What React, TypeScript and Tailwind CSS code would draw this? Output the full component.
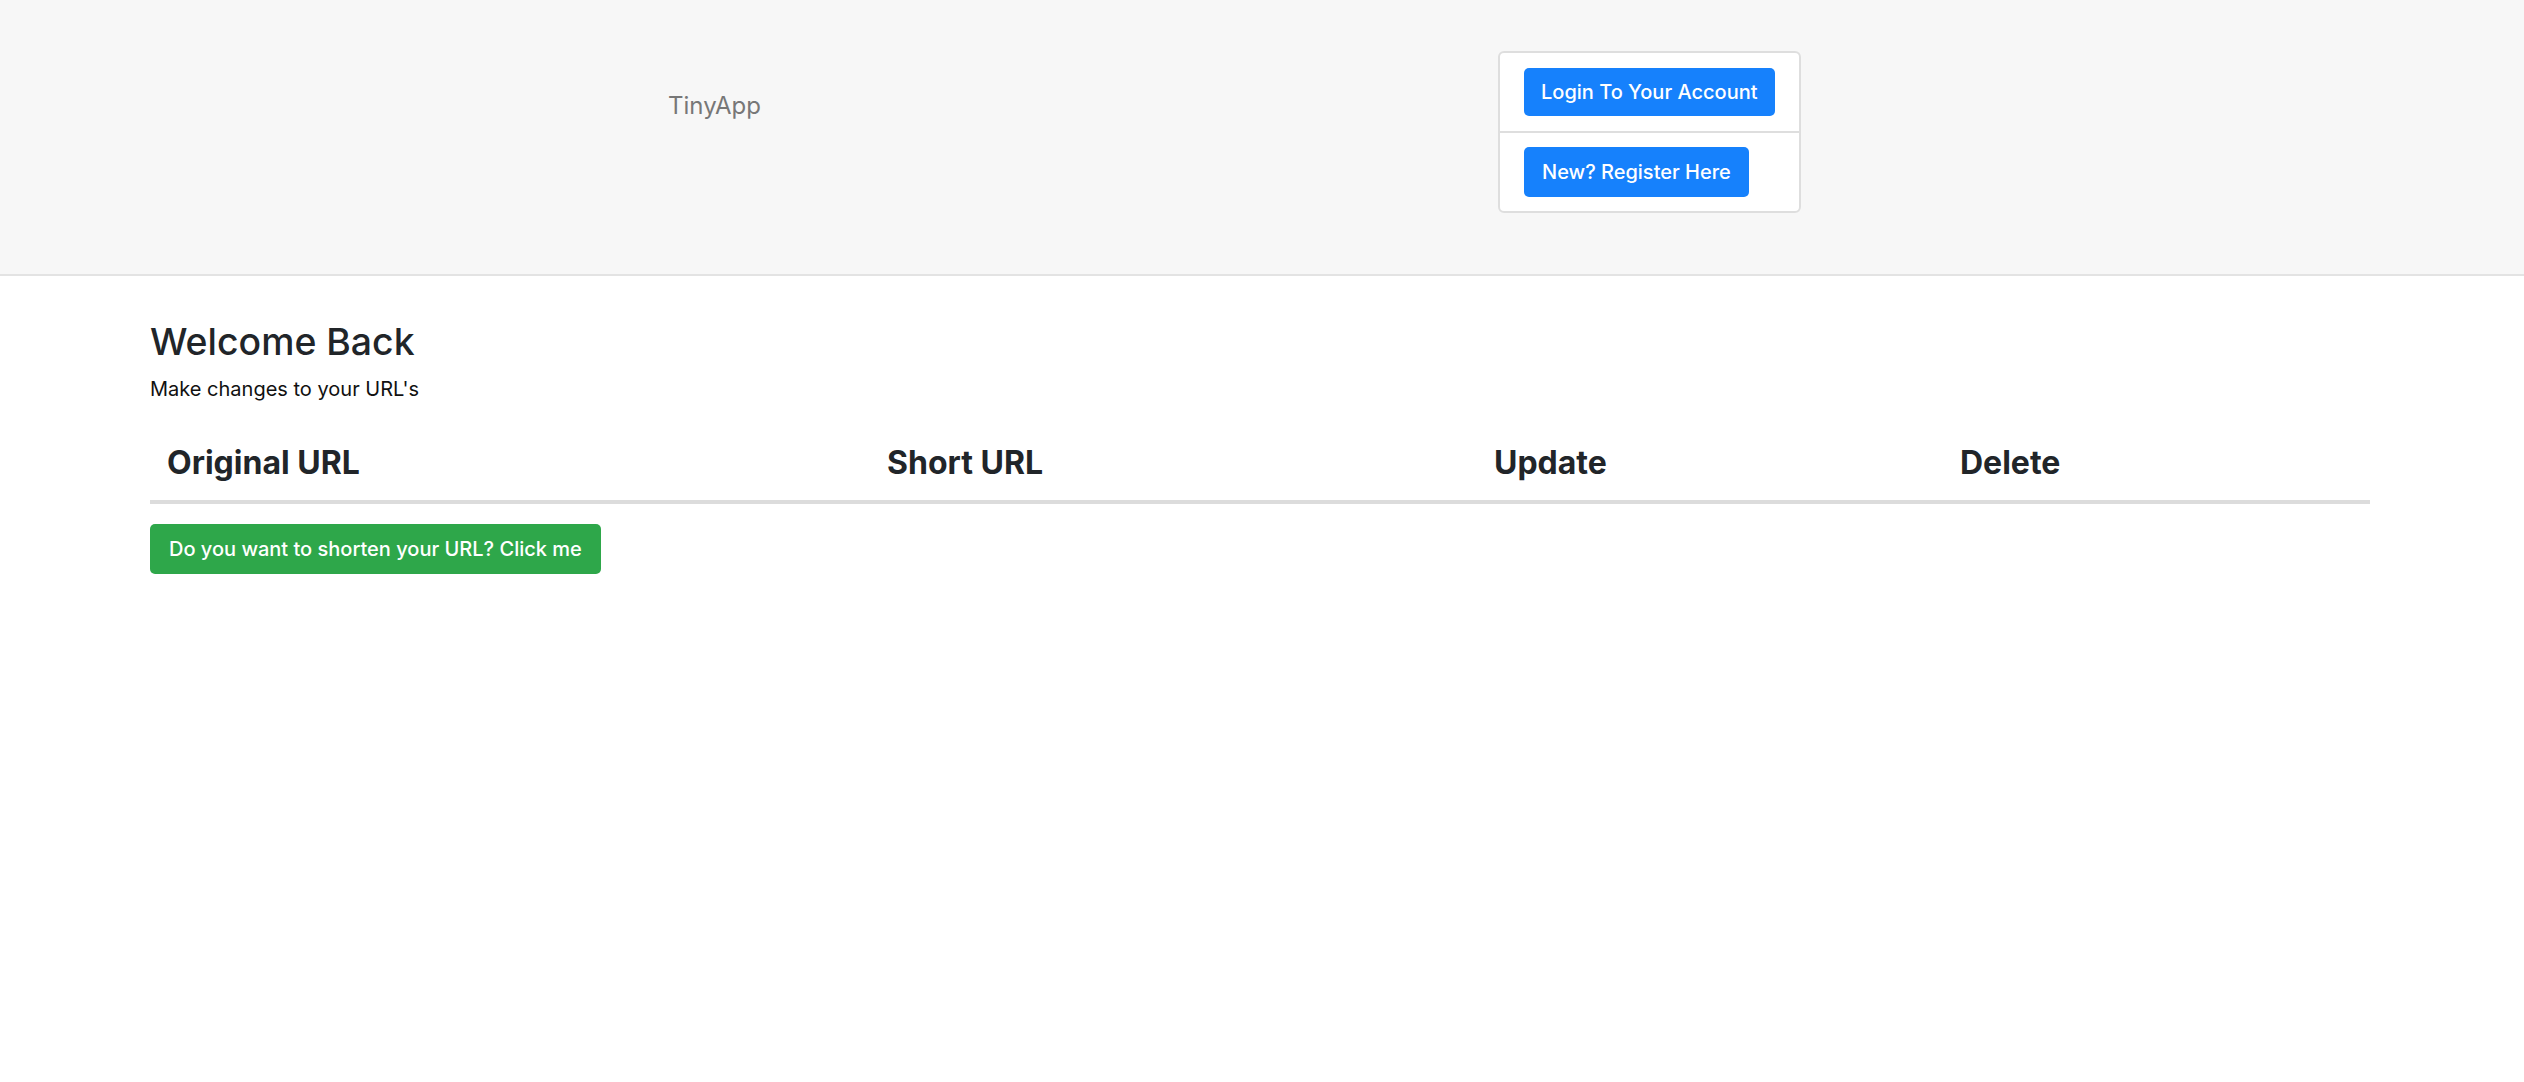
import React from "react";

export default function App() {
  return (
    <div className="min-h-[1082px] bg-white font-['Inter',sans-serif] text-[#212529]">
      <header className="h-[276px] bg-[#f7f7f7] border-b-2 border-[#e3e3e3]">
        <div className="flex items-start pt-[51px]">
          <div className="ml-[668px] w-[830px] mt-[40px] text-[24px] leading-[30px] text-[#777777]">TinyApp</div>
          <div className="w-[303px] bg-white border-2 border-[#dedede] rounded-[6px]">
            <div className="px-[24px] pt-[15px] pb-[15px] border-b-2 border-[#dedede]">
              <button className="h-[48px] px-[17px] rounded-[5px] bg-[#1681fc] text-white text-[20px] font-medium leading-[48px]">
                Login To Your Account
              </button>
            </div>
            <div className="px-[24px] pt-[14px] pb-[14px]">
              <button className="h-[50px] px-[18px] rounded-[5px] bg-[#1681fc] text-white text-[20px] font-medium leading-[50px]">
                New? Register Here
              </button>
            </div>
          </div>
        </div>
      </header>
      <main className="ml-[150px] w-[2220px]">
        <h1 className="mt-[43px] text-[37.4px] leading-[46px] font-medium">Welcome Back</h1>
        <p className="mt-[10px] text-[20px] leading-[28px] text-[#111]">Make changes to your URL's</p>
        <div className="mt-[36px] grid grid-cols-[720px_607px_467px_426px] pb-[13px] border-b-4 border-[#dcdcdc] text-[32px] leading-[48px] font-bold">
          <div className="pl-[17px]">Original URL</div>
          <div className="pl-[17px]">Short URL</div>
          <div className="pl-[17px]">Update</div>
          <div className="pl-[16px]">Delete</div>
        </div>
        <button className="mt-[20px] h-[50px] px-[19px] rounded-[5px] bg-[#2ea74a] text-white text-[20px] font-medium leading-[50px]">
          Do you want to shorten your URL? Click me
        </button>
      </main>
    </div>
  );
}
